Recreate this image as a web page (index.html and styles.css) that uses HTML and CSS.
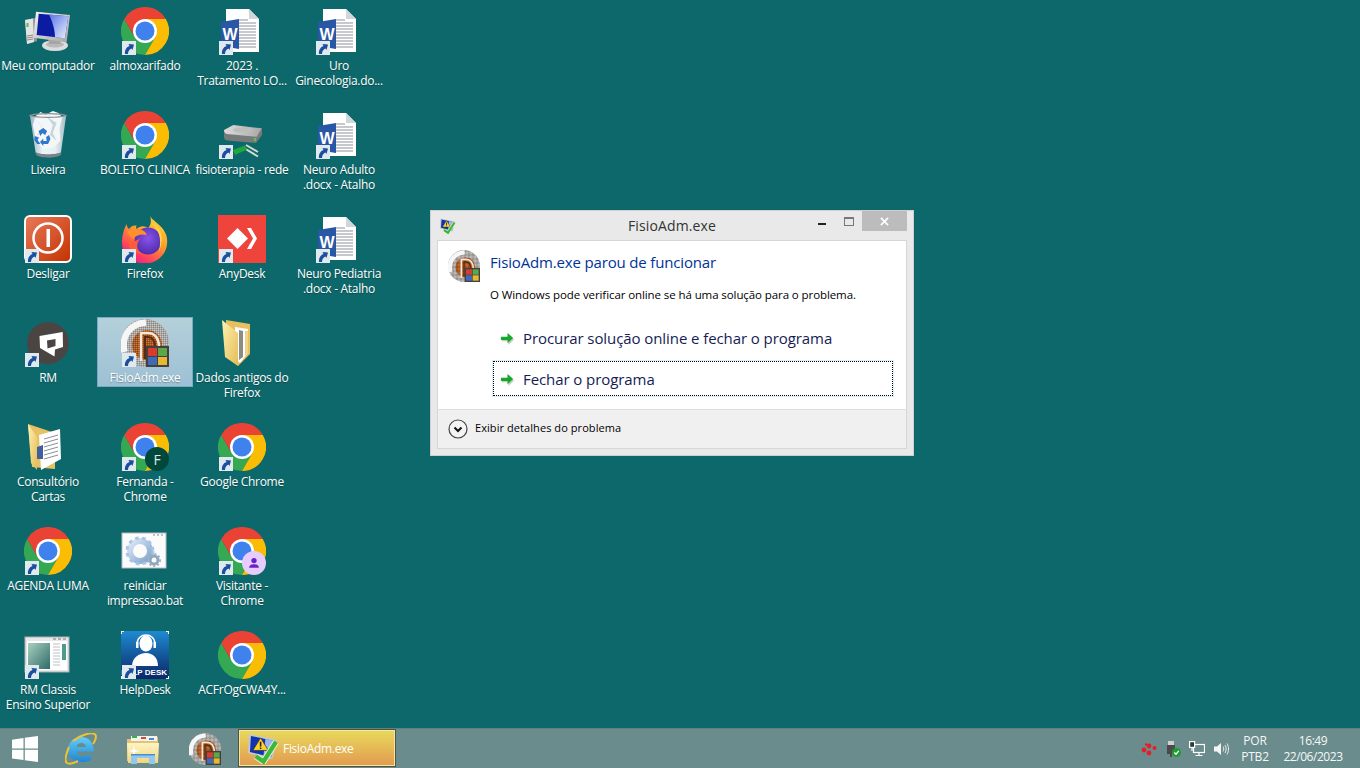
FILE: index.html
```html
<!DOCTYPE html>
<html lang="pt-BR">
<head>
<meta charset="utf-8">
<title>FisioAdm.exe</title>
<link rel="stylesheet" href="styles.css">
</head>
<body>
<svg class="sprite" aria-hidden="true">
  <defs>
    <linearGradient id="gScreenHi" x1="0" y1="0" x2="1" y2="1"><stop offset="0" stop-color="#5a74e6"/><stop offset="1" stop-color="#eef2ff"/></linearGradient>
    <linearGradient id="gSilver" x1="0" y1="0" x2="1" y2="1"><stop offset="0" stop-color="#f4f4f4"/><stop offset="1" stop-color="#a6a6a6"/></linearGradient>
    <linearGradient id="gBin" x1="0" y1="0" x2="1" y2="0"><stop offset="0" stop-color="#9ab6c2"/><stop offset=".35" stop-color="#eaf3f7"/><stop offset=".7" stop-color="#e6eff3"/><stop offset="1" stop-color="#a5bcc6"/></linearGradient>
    <linearGradient id="gPower" x1="0" y1="0" x2="1" y2="1"><stop offset="0" stop-color="#e97a5c"/><stop offset="1" stop-color="#c23200"/></linearGradient>
    <linearGradient id="gFox" x1=".85" y1="0" x2=".25" y2="1"><stop offset="0" stop-color="#ffdf3f"/><stop offset=".45" stop-color="#ff9a2a"/><stop offset=".8" stop-color="#ff3f5f"/><stop offset="1" stop-color="#e8189a"/></linearGradient>
    <radialGradient id="gFoxC" cx=".5" cy=".4" r=".65"><stop offset="0" stop-color="#8a52ea"/><stop offset="1" stop-color="#4a2aa8"/></radialGradient>
    <linearGradient id="gFolder" x1="0" y1="0" x2="1" y2="1"><stop offset="0" stop-color="#fff2b0"/><stop offset="1" stop-color="#e4bc58"/></linearGradient>
    <linearGradient id="gExpl" x1="0" y1="0" x2="0" y2="1"><stop offset="0" stop-color="#fdf4c4"/><stop offset="1" stop-color="#f2d57e"/></linearGradient>
    <linearGradient id="gHelp" x1="0" y1="0" x2="0" y2="1"><stop offset="0" stop-color="#1f8ad0"/><stop offset="1" stop-color="#0a2668"/></linearGradient>
    <linearGradient id="gWin" x1="0" y1="0" x2="1" y2="1"><stop offset="0" stop-color="#a8d0c0"/><stop offset="1" stop-color="#2f6a68"/></linearGradient>
    <linearGradient id="gGear" x1="0" y1="0" x2="1" y2="1"><stop offset="0" stop-color="#dce9f6"/><stop offset="1" stop-color="#7fa3cc"/></linearGradient>
    <linearGradient id="gIe" x1="0" y1="0" x2="0" y2="1"><stop offset="0" stop-color="#62cdf6"/><stop offset="1" stop-color="#1f86d4"/></linearGradient>
    <linearGradient id="gDrive" x1="0" y1="0" x2="1" y2="0"><stop offset="0" stop-color="#dcdcdc"/><stop offset="1" stop-color="#a8a8a8"/></linearGradient>
    <pattern id="pDither" width="2" height="2" patternUnits="userSpaceOnUse"><rect width="2" height="2" fill="#a8a5a2"/><rect width="1" height="1" fill="#8a8682"/><rect x="1" y="1" width="1" height="1" fill="#c8c8c8"/></pattern>
    <pattern id="pBrown" width="2" height="2" patternUnits="userSpaceOnUse"><rect width="2" height="2" fill="#a9561f"/><rect width="1" height="1" fill="#8a4416"/><rect x="1" y="1" width="1" height="1" fill="#c87a3c"/></pattern>

    <symbol id="chrome" viewBox="0 0 48 48">
      <path fill="#34a853" d="M3.2 12A24 24 0 0 0 24 48L34.4 30H13.6Z"/>
      <path fill="#fbbc04" d="M24 12H44.8A24 24 0 0 1 24 48L34.4 30Z"/>
      <path fill="#ea4335" d="M44.8 12A24 24 0 0 0 3.2 12L13.6 30 24 12Z"/>
      <circle cx="24" cy="24" r="12" fill="#fff"/>
      <circle cx="24" cy="24" r="9.5" fill="#3f82ee"/>
    </symbol>
    <symbol id="sc" viewBox="0 0 14 14">
      <rect width="14" height="14" fill="#dfe9ee"/>
      <path fill="#1b4f9e" d="M3 13C2.500 9 4.500 6 7.500 5L6.500 3 12 3.500 10.500 9 9.500 7.500C7.500 8.500 6 10 6 13Z"/>
    </symbol>
    <symbol id="computer" viewBox="0 0 48 48">
      <path fill="#8f9496" d="M1 13 13 10.500V34L3 37Z"/>
      <path fill="#e4e4e4" d="M1 13 9 11.500 10 35 3 37Z"/>
      <rect x="2.500" y="16" width="2" height="4" fill="#55bb55"/>
      <path stroke="#8a8a8a" d="M3 29 9 28M3 31 9 30M3 33 9 32"/>
      <ellipse cx="31" cy="38.500" rx="13" ry="5.500" fill="#dcdcdc"/>
      <ellipse cx="31" cy="37.500" rx="9" ry="3" fill="#b9b9b9"/>
      <path fill="#a6a6a6" d="M24 31 36 33 37 37H25Z"/>
      <path fill="url(#gSilver)" d="M12 4.700 46 8 42.700 35.300 9.300 30.700Z"/>
      <path fill="#0b1ca2" d="M14.700 6.700 44.300 9.300 41 31.300 12.700 28Z"/>
      <path fill="url(#gScreenHi)" d="M25 7.600 44.300 9.300 41 31.300 31 30.200C31 22 28 14 25 7.600Z"/>
    </symbol>
    <symbol id="recycle" viewBox="0 0 48 48">
      <g transform="translate(.3 0) scale(.95 1)">
        <path fill="url(#gBin)" d="M6 5H44L38.500 42C33 46 17 46 12 42Z"/>
        <path fill="#f4f7f8" d="M12 5 17 1 23 3.500 30 0 36 2 40 6 37 18 38 30 30 37 19 38 12 28 9 14Z"/>
        <path fill="#c6d6de" d="M24 6 30 14 27 24 34 30 30 22 34 12ZM14 10 20 18 13 24 22 22Z"/>
        <path fill="none" stroke="#8a8f93" stroke-width="1.300" d="M6 4.500C12 7 38 7 44 4.500 38 2 12 2 6 4.500Z"/>
        <g fill="#2f78cc">
          <path d="M15 20 20 17 24 20 22 24 19 22 17 25Z"/>
          <path d="M23 26 26 24 27.500 28 25 33 20 33 20 35 16.500 31 20 27.500 20 30 23.500 30Z"/>
          <path d="M11 25 15.500 26.500 14 29 17 33 13.500 33 10.500 29Z"/>
        </g>
        <path fill="#7a8388" d="M12 41C16 44 34 44 39 41L38.500 44C33 47.500 17 47.500 12.500 44Z"/>
      </g>
    </symbol>
    <symbol id="word" viewBox="0 0 48 48">
      <path fill="#fff" d="M8 2H31L41 12V45H8Z"/>
      <path fill="#cfd6dc" d="M31 2 41 12H31Z"/>
      <path stroke="#8d9198" stroke-width="1" d="M21 13H30M21 16H38M21 19H38M21 22H38M21 25H38M21 28H38M21 31H38M21 34H38M21 37H38M21 40H38"/>
      <path fill="#2a56a6" d="M3 15 21 12V42L3 39Z"/>
      <text class="word-w" x="12" y="33" text-anchor="middle">W</text>
    </symbol>
    <symbol id="drive" viewBox="0 0 48 48">
      <path fill="#777a7a" d="M6 19V26C6 28 7 29 9 29.500L38 32 44 24V17.300Z"/>
      <path fill="url(#gDrive)" d="M6 19 15.300 14 43.700 17.300 38.700 25.700 9 23C7 22.500 6 21 6 19Z"/>
      <ellipse cx="25" cy="19" rx="10" ry="2.500" fill="#bdbdbd"/>
      <rect x="36" y="27" width="2" height="3" fill="#5ec83c"/>
      <path stroke="#cfdccf" stroke-width="2" fill="none" d="M26 37 40 45.500M28 34 40 41"/>
      <path fill="#1ea83c" d="M15 39 27 34.500 29 38.500 17 44Z"/>
    </symbol>
    <symbol id="power" viewBox="0 0 48 48">
      <rect x="1" y="1" width="46" height="46" rx="5" fill="url(#gPower)" stroke="#fff" stroke-width="2"/>
      <circle cx="24" cy="23" r="14.500" fill="none" stroke="#fff" stroke-width="2.500"/>
      <rect x="22.500" y="14" width="3.500" height="18" fill="#fff"/>
    </symbol>
    <symbol id="firefox" viewBox="0 0 48 48">
      <path fill="url(#gFox)" d="M29 0C30 6 42 9 45.500 21 49 35 39 48.500 24 48.500 9 48.500 0 38 1 25 1.500 19 3 14 5.500 9 6 12 7 13 8 14 10 11 13 10 15.500 10.500 15 12 15 13 15.500 14 20 10 24 11 27 13 31 9 30 4 29 0Z"/>
      <circle cx="27" cy="26" r="13.500" fill="url(#gFoxC)"/>
      <path fill="#ffd54a" d="M30 8C41 12 44 25 38 36 41 24 38 14 30 8Z"/>
      <path fill="#ff8f2a" d="M15 14C20 13.500 25 16 25.500 20 20 18.500 15 20 12 24 9 22 7 19 6 15 9 17 12 16 15 14Z"/>
      <path fill="#ff5a3a" d="M6 21C8 28 14 27 19 23.500 16 28 14 34 21 39 11 39 6 30 6 21Z"/>
    </symbol>
    <symbol id="anydesk" viewBox="0 0 48 48">
      <rect width="48" height="48" fill="#ef443b"/>
      <path fill="#fff" d="M19.500 13 30 23.500 19.500 34 9 23.500Z"/>
      <path fill="#fff" d="M29 13H33L39 23.500 33 34H29L35 23.500Z"/>
    </symbol>
    <symbol id="rm" viewBox="0 0 48 48">
      <circle cx="24" cy="24" r="21" fill="#4a4543"/>
      <path fill="#fff" fill-rule="evenodd" d="M15.500 17 38.700 13 39 28 31 30.500 30.500 37.500 16 29ZM23 21.500 31.500 20 31.500 27 23.500 29.500Z"/>
    </symbol>
    <symbol id="fisio" viewBox="0 0 48 48">
      <circle cx="24" cy="24" r="24" fill="url(#pDither)"/>
      <path fill="none" stroke="#f6f6f6" stroke-width="6.500" d="M3.500 33C0 17 9 4.500 25 3.500"/>
      <circle cx="26" cy="26" r="15" fill="url(#pBrown)"/>
      <path fill="none" stroke="#f0e8de" stroke-width="2.500" d="M20 42V14H27C34 14 38 20 38 27"/>
      <path fill="none" stroke="#5a2a10" stroke-width="2" d="M24 40V18H27C31 18 34 22 34 27"/>
      <rect x="25" y="27" width="23" height="21" fill="#454040"/>
      <rect x="27" y="29" width="9" height="8" fill="#d83b2f"/>
      <rect x="37" y="29" width="9" height="8" fill="#5aa848"/>
      <rect x="27" y="38" width="9" height="8" fill="#3f6ab8"/>
      <rect x="37" y="38" width="9" height="8" fill="#e8b82f"/>
    </symbol>
    <symbol id="folder-docs" viewBox="0 0 48 48">
      <path fill="#e8c060" d="M8 1 32 5V35L20 47 8 36Z"/>
      <path fill="#fff" d="M17 8 30 10V34L22 44 17 40Z"/>
      <path fill="#8c8c84" d="M21 11 25 12V38L21 41Z"/>
      <path fill="#f0d488" d="M27 12 30 12V34L27 37Z"/>
      <path fill="url(#gFolder)" d="M4 1 20 14V47L7 38Z"/>
    </symbol>
    <symbol id="folder-doc" viewBox="0 0 48 48">
      <g transform="translate(3 0)">
        <path fill="#e7c264" d="M1 1 28 10V46L5 44Z"/>
        <path fill="#fff" d="M12 12 33 6 34 36 14 47Z"/>
        <path fill="#3f5fa0" d="M10 24 16 22V36L10 36Z"/>
        <path stroke="#8a8f96" stroke-width="1" d="M17 16 31 12M17 20 31 16M17 24 31 20M17 28 31 24M17 32 31 28M17 36 31 32"/>
        <path fill="url(#gFolder)" d="M1 1 10 14V47L4 40Z"/>
      </g>
    </symbol>
    <symbol id="bat" viewBox="0 0 48 48">
      <rect x="1" y="6" width="44" height="35" fill="#fbfbfb" stroke="#b9bcc0"/>
      <rect x="32" y="7.500" width="2" height="1" fill="#888"/><rect x="36" y="7.500" width="2" height="1" fill="#888"/><rect x="40" y="7.500" width="2" height="1" fill="#888"/>
      <circle cx="19" cy="24" r="10" fill="none" stroke="url(#gGear)" stroke-width="6"/>
      <circle cx="19" cy="24" r="13" fill="none" stroke="#a8c4e6" stroke-width="3" stroke-dasharray="3.500 3.500"/>
      <circle cx="33" cy="33" r="4" fill="none" stroke="#8fa8c0" stroke-width="3"/>
      <circle cx="33" cy="33" r="6" fill="none" stroke="#9db2c6" stroke-width="2" stroke-dasharray="2 2"/>
    </symbol>
    <symbol id="classis" viewBox="0 0 48 48">
      <rect x="1" y="6" width="44" height="35" fill="#e8e8e8" stroke="#a9adb0"/>
      <rect x="3" y="10" width="40" height="29" fill="#fff"/>
      <rect x="4" y="12" width="22" height="26" fill="url(#gWin)"/>
      <path stroke="#bcc0c4" stroke-width="1" d="M29 13H36M29 16H36M29 19H36M29 22H36M29 25H36M29 28H36M29 31H36M29 34H36"/>
      <rect x="38" y="13" width="4" height="16" fill="#4f9a8c"/>
      <rect x="29" y="7.500" width="3" height="1" fill="#777"/><rect x="34" y="7.500" width="3" height="1" fill="#777"/><rect x="39" y="7.500" width="3" height="1" fill="#777"/>
    </symbol>
    <symbol id="helpdesk" viewBox="0 0 48 48">
      <rect width="48" height="48" fill="url(#gHelp)"/>
      <path fill="#fff" d="M0 0H3V1H1V3H0ZM45 0H48V3H47V1H45ZM0 45H1V47H3V48H0ZM47 45H48V48H45V47H47Z"/>
      <ellipse cx="25" cy="12.500" rx="6.500" ry="8" fill="#fff"/>
      <path fill="none" stroke="#fff" stroke-width="1.500" d="M16 13C16 1 34 1 34 13"/>
      <rect x="15" y="11" width="2.500" height="6" fill="#fff"/><rect x="32.500" y="11" width="2.500" height="6" fill="#fff"/>
      <path fill="#fff" d="M11 35C11 27 18 22 25 22 32 22 37 27 37 35Z"/>
      <text class="help-text" x="46" y="44" text-anchor="end">HELP DESK</text>
    </symbol>
    <symbol id="winlogo" viewBox="0 0 26 26">
      <path fill="#fff" d="M0 3.700 11.500 2V12.500H0ZM12.800 1.800 26 0V12.500H12.800ZM0 13.700H11.500V24L0 22.500ZM12.800 13.700H26V26L12.800 24.200Z"/>
    </symbol>
    <symbol id="ie" viewBox="0 0 32 32">
      <path fill="url(#gIe)" fill-rule="evenodd" d="M16 4C24 4 29 10 29 18.500H11.500C12 24 20 25 26 20.500V27C16 32 3 27.500 3 17 3 9.500 9 4 16 4ZM11.500 14H21C20.500 8.500 12 8.500 11.500 14Z"/>
      <path fill="none" stroke="#f2c230" stroke-width="2" d="M8 8C15 2 28-2 30.500 2 32 5 30 8 28 11M4 14C1 21-1 28 2 30 5 32 9 30 13 28"/>
    </symbol>
    <symbol id="explorer" viewBox="0 0 32 32">
      <path fill="#e4c474" d="M0 6H11L13 4H31V28H0Z"/>
      <rect x="4" y="3" width="26" height="5" fill="#f4f4ee"/>
      <rect x="5" y="3" width="5" height="2" fill="#37b34a"/><rect x="14" y="4" width="5" height="2" fill="#d8483c"/><rect x="22" y="5" width="5" height="2" fill="#4a8ad8"/>
      <path fill="url(#gExpl)" d="M0 10H32L31 30H1Z"/>
      <path fill="#fff" d="M7 12 8 17 13 18 8 19 7 24 6 19 1 18 6 17Z"/>
      <path fill="#92c8ee" d="M4 31V21H28V31H22V25H10V31Z"/>
      <path fill="#4a8ed0" d="M4 21H28V22.500H4Z"/>
    </symbol>
    <symbol id="warn" viewBox="0 0 32 32">
      <path fill="#c4c8ce" d="M1 1 30 7 25 27 0 21Z"/>
      <path fill="#1034b0" d="M3 3 28 8.500 24 25 2 19.500Z"/>
      <path fill="#9fb4ee" d="M18 6 28 8.500 24 25 16 23Z"/>
      <path fill="#ffd028" stroke="#2a2a2a" stroke-width=".7" d="M13 5 21 18H5Z"/>
      <rect x="12.200" y="9" width="1.600" height="5" fill="#222"/><rect x="12.200" y="15" width="1.600" height="1.500" fill="#222"/>
      <path fill="#9a9a9a" d="M7 23 16 25 16 28 9 27Z"/>
      <path fill="none" stroke="#e8f4d8" stroke-width="6.500" d="M8 24 16 29.500 29 9"/>
      <path fill="none" stroke="#3cb83a" stroke-width="4.500" d="M8 24 16 29.500 29 9"/>
    </symbol>
    <symbol id="arrow" viewBox="0 0 16 16">
      <path fill="#c9c9c9" d="M2 8H9V4L15 9 9 15V11H2Z"/>
      <path fill="#14a92a" d="M1 6H8V2L14 7.500 8 13V9.500H1Z"/>
    </symbol>
  </defs>
</svg>

<main class="desktop">
  <div class="icons">
    <div class="item"><svg class="ico"><use href="#computer"/></svg><span class="lbl">Meu computador</span></div>
    <div class="item"><svg class="ico"><use href="#recycle"/></svg><span class="lbl">Lixeira</span></div>
    <div class="item"><svg class="ico"><use href="#power"/></svg><svg class="sc"><use href="#sc"/></svg><span class="lbl">Desligar</span></div>
    <div class="item"><svg class="ico"><use href="#rm"/></svg><svg class="sc"><use href="#sc"/></svg><span class="lbl">RM</span></div>
    <div class="item"><svg class="ico"><use href="#folder-doc"/></svg><span class="lbl">Consultório<br>Cartas</span></div>
    <div class="item"><svg class="ico"><use href="#chrome"/></svg><svg class="sc"><use href="#sc"/></svg><span class="lbl">AGENDA LUMA</span></div>
    <div class="item"><svg class="ico"><use href="#classis"/></svg><svg class="sc"><use href="#sc"/></svg><span class="lbl">RM Classis<br>Ensino Superior</span></div>

    <div class="item"><svg class="ico"><use href="#chrome"/></svg><svg class="sc"><use href="#sc"/></svg><span class="lbl">almoxarifado</span></div>
    <div class="item"><svg class="ico"><use href="#chrome"/></svg><svg class="sc"><use href="#sc"/></svg><span class="lbl">BOLETO CLINICA</span></div>
    <div class="item"><svg class="ico"><use href="#firefox"/></svg><svg class="sc"><use href="#sc"/></svg><span class="lbl">Firefox</span></div>
    <div class="item selected"><svg class="ico"><use href="#fisio"/></svg><svg class="sc"><use href="#sc"/></svg><span class="lbl">FisioAdm.exe</span></div>
    <div class="item"><svg class="ico"><use href="#chrome"/></svg><svg class="sc"><use href="#sc"/></svg><span class="badge badge-f">F</span><span class="lbl">Fernanda -<br>Chrome</span></div>
    <div class="item"><svg class="ico"><use href="#bat"/></svg><span class="lbl">reiniciar<br>impressao.bat</span></div>
    <div class="item"><svg class="ico"><use href="#helpdesk"/></svg><svg class="sc"><use href="#sc"/></svg><span class="lbl">HelpDesk</span></div>

    <div class="item"><svg class="ico"><use href="#word"/></svg><svg class="sc"><use href="#sc"/></svg><span class="lbl">2023 .<br>Tratamento LO...</span></div>
    <div class="item"><svg class="ico"><use href="#drive"/></svg><svg class="sc"><use href="#sc"/></svg><span class="lbl">fisioterapia - rede</span></div>
    <div class="item"><svg class="ico"><use href="#anydesk"/></svg><svg class="sc"><use href="#sc"/></svg><span class="lbl">AnyDesk</span></div>
    <div class="item"><svg class="ico"><use href="#folder-docs"/></svg><span class="lbl">Dados antigos do<br>Firefox</span></div>
    <div class="item"><svg class="ico"><use href="#chrome"/></svg><svg class="sc"><use href="#sc"/></svg><span class="lbl">Google Chrome</span></div>
    <div class="item"><svg class="ico"><use href="#chrome"/></svg><svg class="sc"><use href="#sc"/></svg><span class="badge badge-v"><svg class="person" viewBox="0 0 10 10"><circle cx="5" cy="3" r="2.200" fill="#6a1fc8"/><path fill="#6a1fc8" d="M1 9C1 6.500 3 6 5 6 7 6 9 6.500 9 9Z"/></svg></span><span class="lbl">Visitante -<br>Chrome</span></div>
    <div class="item"><svg class="ico"><use href="#chrome"/></svg><span class="lbl">ACFrOgCWA4Y...</span></div>

    <div class="item"><svg class="ico"><use href="#word"/></svg><svg class="sc"><use href="#sc"/></svg><span class="lbl">Uro<br>Ginecologia.do...</span></div>
    <div class="item"><svg class="ico"><use href="#word"/></svg><svg class="sc"><use href="#sc"/></svg><span class="lbl">Neuro Adulto<br>.docx - Atalho</span></div>
    <div class="item"><svg class="ico"><use href="#word"/></svg><svg class="sc"><use href="#sc"/></svg><span class="lbl">Neuro Pediatria<br>.docx - Atalho</span></div>
  </div>

  <section class="dialog">
    <header class="titlebar">
      <svg class="title-ico"><use href="#warn"/></svg>
      <span class="title-text">FisioAdm.exe</span>
      <span class="btn-min"></span>
      <span class="btn-max"></span>
      <span class="btn-close"><svg class="close-x" viewBox="0 0 10 10"><path stroke="#fff" stroke-width="1.800" d="M1 1 9 9M9 1 1 9"/></svg></span>
    </header>
    <div class="panel">
      <div class="instr">
        <svg class="instr-ico"><use href="#fisio"/></svg>
        <div class="instr-text">
          <h1 class="heading">FisioAdm.exe parou de funcionar</h1>
          <p class="body-text">O Windows pode verificar online se há uma solução para o problema.</p>
        </div>
      </div>
      <div class="links">
        <div class="link"><svg class="link-ico"><use href="#arrow"/></svg><span>Procurar solução online e fechar o programa</span></div>
        <div class="link focus"><svg class="link-ico"><use href="#arrow"/></svg><span>Fechar o programa</span></div>
      </div>
      <footer class="details">
        <svg class="chev" viewBox="0 0 20 20"><circle cx="10" cy="10" r="9" fill="#f4f4f4" stroke="#444" stroke-width="1.200"/><path fill="none" stroke="#111" stroke-width="2" d="M6.500 8.500 10 12 13.500 8.500"/></svg>
        <span class="details-text">Exibir detalhes do problema</span>
      </footer>
    </div>
  </section>
</main>

<nav class="taskbar">
  <div class="pin pin-start"><svg class="start-ico"><use href="#winlogo"/></svg></div>
  <div class="pin"><svg class="pin-ico"><use href="#ie"/></svg></div>
  <div class="pin"><svg class="pin-ico"><use href="#explorer"/></svg></div>
  <div class="pin"><svg class="pin-ico"><use href="#fisio"/></svg></div>
  <div class="task-active"><svg class="task-ico"><use href="#warn"/></svg><span>FisioAdm.exe</span></div>
  <div class="tray">
    <div class="tray-ico"><svg class="tray-svg" viewBox="0 0 16 16"><g fill="#e3202a"><circle cx="3" cy="9" r="2.400"/><circle cx="8" cy="5" r="2.400"/><circle cx="8" cy="12" r="2.400"/><circle cx="13.500" cy="7" r="2"/><circle cx="5" cy="3.500" r="1.200"/></g></svg></div>
    <div class="tray-ico"><svg class="tray-svg" viewBox="0 0 16 16"><rect x="3" y="0" width="6" height="5" fill="#d0d0d0"/><rect x="2" y="4" width="8" height="9" fill="#4a4a4a"/><rect x="5" y="13" width="2" height="3" fill="#4a4a4a"/><circle cx="11.500" cy="11.500" r="4.500" fill="#1e9c32"/><path fill="none" stroke="#fff" stroke-width="1.300" d="M9.300 11.500 11 13.200 13.800 9.800"/></svg></div>
    <div class="tray-ico"><svg class="tray-svg" viewBox="0 0 16 16"><g fill="none" stroke="#fff" stroke-width="1.200"><rect x="4.500" y="3.500" width="11" height="8"/><path d="M10 11.500V14M6.500 14.500H13.500"/></g><rect x=".6" y=".6" width="5" height="5.800" fill="#2c3a3a" stroke="#fff" stroke-width="1.200"/><path stroke="#fff" stroke-width="1.200" d="M3 6.400V10"/></svg></div>
    <div class="tray-ico"><svg class="tray-svg" viewBox="0 0 16 16"><path fill="#f4f4f4" d="M1 5.500H4L8 2V14L4 10.500H1Z"/><path fill="none" stroke="#e8eeee" d="M10 5.500C11 7 11 9 10 10.500M12 4C13.500 6.500 13.500 9.500 12 12M14 2.500C16 6 16 10 14 13.500"/></svg></div>
    <div class="lang">POR<br>PTB2</div>
    <div class="clock">16:49<br>22/06/2023</div>
  </div>
</nav>
</body>
</html>
```

FILE: styles.css
```css
* { box-sizing: border-box; }

html, body { height: 100%; }

body {
  margin: 0;
  height: 768px;
  overflow: hidden;
  display: flex;
  flex-direction: column;
  background: #0d686b;
  font-family: "Open Sans", "Noto Sans", "Liberation Sans", sans-serif;
  font-size: 12px;
  color: #fff;
}

.sprite { position: absolute; width: 0; height: 0; }

.desktop { position: relative; flex: 1; min-height: 0; }

.icons {
  display: grid;
  grid-auto-flow: column;
  grid-template-rows: repeat(7, 104px);
  grid-template-columns: repeat(4, 96px);
  column-gap: 1px;
  padding-top: 5px;
}

.item {
  position: relative;
  align-self: start;
  display: flex;
  flex-direction: column;
  align-items: center;
  padding: 2px 0 1px;
  border: 1px solid transparent;
}

.item.selected {
  background: linear-gradient(#b4d0da, #9cc0d4);
  border-color: #7da6c8;
}

.ico { display: block; width: 48px; height: 48px; margin-top: -1px; }

.sc { position: absolute; left: 24px; top: 35px; width: 14px; height: 14px; }

.lbl {
  margin-top: 3px;
  width: 100%;
  line-height: 15px;
  text-align: center;
  white-space: nowrap;
  letter-spacing: -.28px;
  text-shadow: 0 1px 1px rgba(0, 0, 0, .3);
}

.badge {
  position: absolute;
  left: 47px;
  top: 25px;
  width: 24px;
  height: 24px;
  border-radius: 50%;
  display: flex;
  align-items: center;
  justify-content: center;
  font-size: 14px;
}
.badge-f { background: #00483c; color: #dfe8e4; }
.badge-v { background: #e6ccff; }
.person { width: 12px; height: 12px; }

.word-w { font: bold 16px "Liberation Sans", sans-serif; fill: #fff; }
.help-text { font: bold 8px "Liberation Sans", sans-serif; fill: #fff; }

/* dialog */
.dialog {
  position: absolute;
  left: 430px;
  top: 210px;
  width: 484px;
  height: 246px;
  display: flex;
  flex-direction: column;
  padding: 0 6px 6px;
  background: #e9e9e9;
  border: 1px solid #cfcfcf;
  color: #000;
}

.titlebar {
  position: relative;
  flex: none;
  height: 29px;
  display: flex;
  align-items: center;
  justify-content: center;
}

.title-ico { position: absolute; left: 3px; top: 7px; width: 16px; height: 16px; }

.title-text { font-size: 14px; color: #333; letter-spacing: .13px; }

.btn-min { position: absolute; left: 381px; top: 12px; width: 8px; height: 2px; background: #222; }
.btn-max { position: absolute; left: 407px; top: 6px; width: 10px; height: 9px; border: 1px solid #777; border-top-width: 2px; }

.btn-close {
  position: absolute;
  left: 425px;
  top: 0;
  width: 45px;
  height: 20px;
  background: #bcbcbc;
  display: flex;
  align-items: center;
  justify-content: center;
}
.close-x { width: 9px; height: 9px; }

.panel {
  flex: 1;
  display: flex;
  flex-direction: column;
  background: #fff;
  border: 1px solid #d6d6d6;
}

.instr { display: flex; gap: 10px; padding: 9px 0 0 10px; }
.instr-ico { flex: none; width: 32px; height: 32px; }
.heading {
  margin: 1px 0 14px;
  font-size: 15px;
  font-weight: 400;
  line-height: 22px;
  color: #003399;
  letter-spacing: -.16px;
}
.body-text { margin: 0; font-size: 11.5px; line-height: 16px; letter-spacing: -.09px; }

.links {
  display: flex;
  flex-direction: column;
  gap: 3px;
  margin: 16px 12px 0 54px;
}
.link {
  height: 38px;
  display: flex;
  align-items: center;
  gap: 8px;
  padding-left: 7px;
  border: 1px solid transparent;
  font-size: 15px;
  color: #151c55;
  letter-spacing: -.08px;
}
.link.focus {
  height: 37px;
  padding-top: 1px;
  border-color: #d8f0fa;
  outline: 1px dotted #000;
  outline-offset: -2px;
}
.link-ico { flex: none; width: 15px; height: 15px; }

.details {
  margin-top: auto;
  height: 39px;
  display: flex;
  align-items: center;
  gap: 7px;
  padding-left: 10px;
  background: #f0f0f0;
  border-top: 1px solid #dfdfdf;
  font-size: 11px;
  letter-spacing: .07px;
}
.details-text { margin-bottom: 4px; }
.chev { flex: none; width: 20px; height: 20px; }

/* taskbar */
.taskbar {
  flex: none;
  height: 40px;
  display: flex;
  background: #6a8c8c;
  border-top: 1px solid #5e8282;
}

.pin { width: 62px; display: flex; align-items: center; justify-content: center; }
.pin-start { width: 50px; }
.start-ico { width: 26px; height: 26px; }
.pin-ico { width: 32px; height: 32px; }

.task-active {
  width: 158px;
  height: 38px;
  margin-left: 2px;
  display: flex;
  align-items: center;
  gap: 4px;
  padding-left: 9px;
  background: linear-gradient(#e8da5c, #e29a50);
  border: 1px solid #55523a;
  box-shadow: inset 0 0 0 1px #f2e7a8;
  letter-spacing: -.3px;
}
.task-ico { width: 31px; height: 31px; flex: none; }

.tray { margin-left: auto; display: flex; align-items: center; padding-right: 11px; }
.tray-ico { width: 24px; display: flex; justify-content: center; }
.tray-svg { width: 16px; height: 16px; }
.lang, .clock { text-align: center; line-height: 16px; color: #f4f8f8; }
.lang { width: 44px; letter-spacing: -.2px; }
.clock { width: 72px; letter-spacing: -.45px; }
```
